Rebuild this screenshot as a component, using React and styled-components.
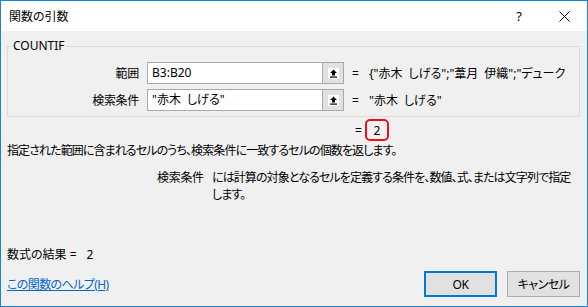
import React from 'react';
import styled, { createGlobalStyle } from 'styled-components';

const GlobalStyle = createGlobalStyle`
  html, body {
    margin: 0;
    padding: 0;
    background: #ffffff;
  }
  body {
    font-family: "Noto Sans", "Noto Sans CJK JP", sans-serif;
    font-size: 12px;
    color: #000000;
    font-feature-settings: "palt";
  }
`;

const args = [
  { label: '範囲', value: 'B3:B20', result: '{"赤木\u2002しげる";"葦月\u2002伊織";"デューク東郷";"赤木\u2002しげる"}' },
  { label: '検索条件', value: '"赤木\u2002しげる"', result: '"赤木\u2002しげる"' },
];

const UpArrow = () => (
  <svg width="11" height="11" viewBox="0 0 11 11">
    <rect x="0" y="0" width="11" height="11" fill="#ffffff" />
    <path d="M5.5 1.5 L9 5 H7 V7.5 H4 V5 H2 Z" fill="#000000" />
    <rect x="2" y="8.5" width="7" height="1.2" fill="#000000" />
  </svg>
);

const CloseIcon = () => (
  <svg width="11" height="11" viewBox="0 0 11 11">
    <path d="M0.5 0.5 L10.5 10.5 M10.5 0.5 L0.5 10.5" stroke="#000000" strokeWidth="1" />
  </svg>
);

export default function App() {
  return (
    <Dialog>
      <GlobalStyle />
      <TitleBar>
        <Title>関数の引数</Title>
        <TitleButton>?</TitleButton>
        <TitleButton>
          <CloseIcon />
        </TitleButton>
      </TitleBar>
      <Body>
        <GroupBox>
          <Legend>COUNTIF</Legend>
          <ArgGrid>
            {args.map(arg => (
              <React.Fragment key={arg.label}>
                <ArgLabel>{arg.label}</ArgLabel>
                <Field>
                  <FieldText>{arg.value}</FieldText>
                  <PickButton>
                    <UpArrow />
                  </PickButton>
                </Field>
                <Equals>=</Equals>
                <ArgValue>{arg.result}</ArgValue>
              </React.Fragment>
            ))}
          </ArgGrid>
        </GroupBox>
        <ResultRow>
          <span>=</span>
          <ResultBox>2</ResultBox>
        </ResultRow>
        <Description>
          指定された範囲に含まれるセルのうち、検索条件に一致するセルの個数を返します。
        </Description>
        <ArgHelp>
          <ArgHelpName>検索条件</ArgHelpName>
          <ArgHelpText>
            には計算の対象となるセルを定義する条件を、数値、式、または文字列で指定
            <br />
            します。
          </ArgHelpText>
        </ArgHelp>
        <FormulaResult>
          数式の結果 =<ResultValue>2</ResultValue>
        </FormulaResult>
        <Footer>
          <HelpLink href="#">この関数のヘルプ(H)</HelpLink>
          <Buttons>
            <DialogButton primary>OK</DialogButton>
            <DialogButton>キャンセル</DialogButton>
          </Buttons>
        </Footer>
      </Body>
    </Dialog>
  );
}

//#region styles
const Dialog = styled.div`
  width: 588px;
  height: 307px;
  box-sizing: border-box;
  border: 1px solid #1883d7;
  background: #f0f0f0;
  display: flex;
  flex-direction: column;
  overflow: hidden;
`;

const TitleBar = styled.div`
  height: 30px;
  background: #ffffff;
  display: flex;
  align-items: center;
  padding-left: 8px;
`;

const Title = styled.div`
  flex: 1;
  font-size: 12px;
`;

const TitleButton = styled.div`
  width: 44px;
  height: 30px;
  display: flex;
  align-items: center;
  justify-content: center;
  font-size: 13px;
  font-family: "Noto Sans", sans-serif;
  &:last-child {
    width: 46px;
  }
`;

const Body = styled.div`
  flex: 1;
  display: flex;
  flex-direction: column;
  padding: 0 7px 0 6px;
`;

const GroupBox = styled.fieldset`
  margin: 7px 0 0 0;
  padding: 8px 0 5px 0;
  min-width: 0;
  border: 1px solid #dcdcdc;
`;

const Legend = styled.legend`
  padding: 0 1px;
  margin-left: 4px;
  line-height: 16px;
  font-size: 12px;
`;

const ArgGrid = styled.div`
  display: grid;
  grid-template-columns: 131px 197px 12px 1fr;
  grid-auto-rows: 22px;
  row-gap: 5px;
  align-items: center;
`;

const ArgLabel = styled.div`
  text-align: right;
  letter-spacing: -0.3px;
`;

const Field = styled.div`
  grid-column: 2;
  margin-left: 8px;
  height: 22px;
  box-sizing: border-box;
  border: 1px solid #a9a9a9;
  background: #ffffff;
  display: flex;
  align-items: stretch;
  width: 197px;
`;

const FieldText = styled.div`
  flex: 1;
  padding-left: 4px;
  line-height: 20px;
  white-space: nowrap;
  overflow: hidden;
`;

const PickButton = styled.div`
  width: 20px;
  background: #e1e1e1;
  border-left: 1px solid #adadad;
  display: flex;
  align-items: center;
  justify-content: center;
`;

const Equals = styled.div`
  margin-left: 16px;
  text-align: center;
`;

const ArgValue = styled.div`
  margin-left: 21px;
  margin-right: 13px;
  white-space: nowrap;
  overflow: hidden;
`;

const ResultRow = styled.div`
  margin-top: 2px;
  padding-left: 348px;
  display: flex;
  align-items: center;
  gap: 3px;
  height: 22px;
`;

const ResultBox = styled.div`
  width: 24px;
  height: 22px;
  box-sizing: border-box;
  border: 2px solid #e81123;
  border-radius: 5px;
  display: flex;
  align-items: center;
  justify-content: center;
`;

const Description = styled.div`
  margin-top: 2px;
  line-height: 16px;
  letter-spacing: -0.9px;
`;

const ArgHelp = styled.div`
  margin-top: 10px;
  display: flex;
  padding-left: 150px;
  line-height: 17px;
`;

const ArgHelpName = styled.div`
  width: 55px;
  flex-shrink: 0;
  letter-spacing: -0.3px;
`;

const ArgHelpText = styled.div`
  white-space: nowrap;
  letter-spacing: -0.9px;
`;

const FormulaResult = styled.div`
  margin-top: 44px;
  line-height: 16px;
  display: flex;
  gap: 4px;
`;

const ResultValue = styled.span`
  margin-left: 6px;
`;

const Footer = styled.div`
  margin-top: 8px;
  display: flex;
  align-items: center;
  justify-content: space-between;
`;

const HelpLink = styled.a`
  color: #0066cc;
  text-decoration: underline;
  letter-spacing: -0.6px;
`;

const Buttons = styled.div`
  display: flex;
  gap: 10px;
`;

const DialogButton = styled.button`
  width: 73px;
  height: 26px;
  box-sizing: border-box;
  background: #e1e1e1;
  border: ${p => (p.primary ? '2px solid #0078d7' : '1px solid #adadad')};
  font-family: "Noto Sans", "Noto Sans CJK JP", sans-serif;
  font-size: 12px;
  font-feature-settings: "palt";
  letter-spacing: -0.5px;
  padding: 0;
  color: #000000;
`;
//#endregion
